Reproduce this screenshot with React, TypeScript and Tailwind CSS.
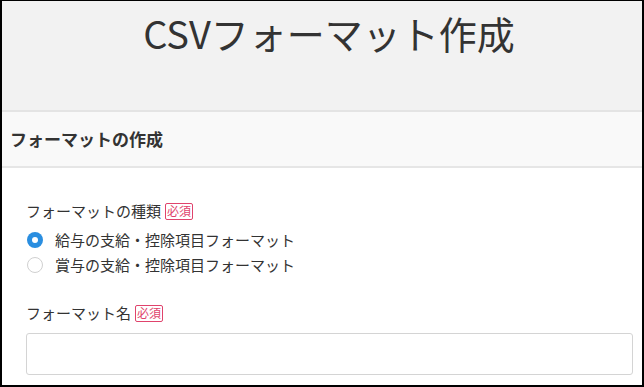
import React from "react";

const font = { fontFamily: '"Noto Sans CJK JP", "Noto Sans", sans-serif' };

function Badge() {
  return (
    <span className="ml-[4px] inline-flex items-center justify-center border border-[#e0436c] rounded-[2px] px-[1px] h-[17px] text-[12px] leading-none text-[#e0436c]">
      必須
    </span>
  );
}

export default function App() {
  return (
    <div style={font} className="w-[644px] h-[387px] overflow-hidden border-t border-l-2 border-r-2 border-b-2 border-black bg-white text-[#333]">
      <div className="h-[111px] bg-[#f2f2f2] border-b-2 border-[#e4e4e4] flex justify-center">
        <h1 className="mt-[8px] ml-[14px] text-[38px] leading-[48px] text-[#333]">CSVフォーマット作成</h1>
      </div>
      <div className="h-[56px] bg-[#f9f9f9] border-b-2 border-[#e6e6e6] flex items-center pl-[8px]">
        <h2 className="text-[17px] font-bold text-[#333]">フォーマットの作成</h2>
      </div>
      <div className="pl-[24px] pr-[9px] pt-[33px]">
        <div className="flex items-center text-[15px] h-[20px]">
          フォーマットの種類<Badge />
        </div>
        <div className="mt-[9px] flex flex-col gap-[5px]">
          <label className="flex items-center h-[20px] text-[15px]">
            <span className="ml-[1px] w-[16px] h-[16px] rounded-full bg-[#2a8ee0] flex items-center justify-center">
              <span className="w-[6px] h-[6px] rounded-full bg-white" />
            </span>
            <span className="ml-[12px]">給与の支給・控除項目フォーマット</span>
          </label>
          <label className="flex items-center h-[20px] text-[15px]">
            <span className="ml-[1px] w-[16px] h-[16px] rounded-full border border-[#d0d0d0] bg-white" />
            <span className="ml-[12px]">賞与の支給・控除項目フォーマット</span>
          </label>
        </div>
        <div className="mt-[28px] flex items-center text-[15px] h-[20px]">
          フォーマット名<Badge />
        </div>
        <div className="mt-[10px] h-[42px] border border-[#d4d4d4] rounded-[3px] bg-white" />
      </div>
    </div>
  );
}
